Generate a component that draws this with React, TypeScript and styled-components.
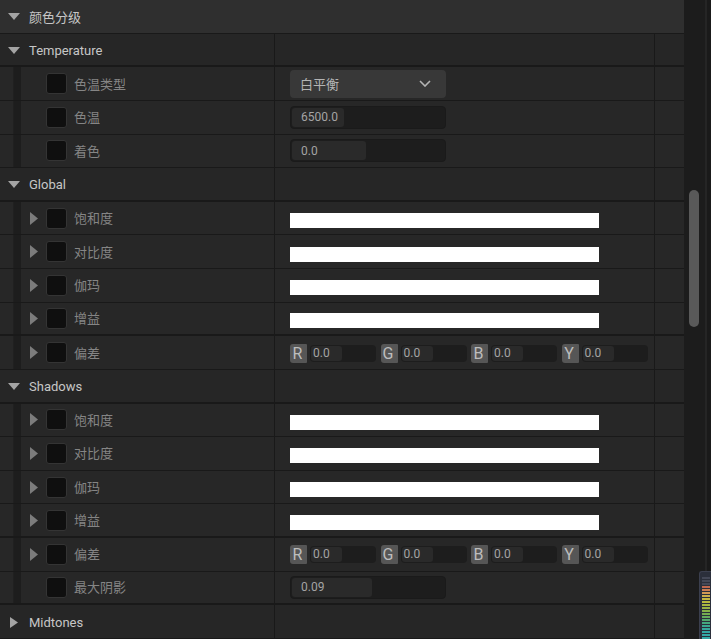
import React from 'react';
import styled, { createGlobalStyle } from 'styled-components';

const GlobalStyle = createGlobalStyle`
  html, body { margin: 0; padding: 0; background: #1a1a1a; }
  body { font-family: Roboto, "Noto Sans CJK SC", sans-serif; -webkit-font-smoothing: antialiased; }
  #root { width: 711px; height: 639px; }
`;

const ROW_H = '33.63px';
const LINE = '#191919';

const Screen = styled.div`
  position: relative;
  display: flex;
  width: 711px;
  height: 639px;
  overflow: hidden;
  background: #1a1a1a;
`;

const Panel = styled.div`
  width: 684px;
  display: flex;
  flex-direction: column;
  background: #262626;
`;

const CategoryRow = styled.div`
  box-sizing: border-box;
  height: ${ROW_H};
  flex: none;
  display: flex;
  align-items: center;
  gap: 9px;
  padding-left: 8px;
  background: #2f2f2f;
  border-bottom: 1px solid ${LINE};
  color: #c6c6c6;
  font-size: 13px;
`;

const Row = styled.div<{ $thick?: boolean; $item?: boolean }>`
  box-sizing: border-box;
  height: ${ROW_H};
  flex: none;
  display: flex;
  background: ${(p) => (p.$item ? '#272727' : '#262626')};
  border-bottom: ${(p) => (p.$thick ? 2 : 1)}px solid ${LINE};
`;

const NameCell = styled.div`
  width: 274px;
  flex: none;
  display: flex;
  align-items: center;
  border-right: 1px solid ${LINE};
`;

const ValueCell = styled.div`
  width: 380px;
  flex: none;
  display: flex;
  align-items: center;
  padding-left: 15px;
  box-sizing: border-box;
  border-right: 1px solid ${LINE};
`;

const ResetCell = styled.div`
  flex: 1;
`;

const GroupHead = styled.div<{ $open: boolean }>`
  display: flex;
  align-items: center;
  margin-top: 2px;
  padding-left: ${(p) => (p.$open ? 8 : 10)}px;
  gap: ${(p) => (p.$open ? 9 : 11)}px;
  color: #c6c6c6;
  font-size: 13px;
`;

const IndentStrip = styled.div`
  align-self: stretch;
  width: 8px;
  margin-left: 13px;
  background: #1d1d1d;
  border-left: 1px solid #202020;
  box-sizing: border-box;
`;

const ArrowSlot = styled.div`
  width: 16px;
  margin-left: 9px;
  display: flex;
  align-items: center;
`;

const Check = styled.div`
  width: 21px;
  height: 21px;
  box-sizing: border-box;
  border-radius: 3px;
  background: #0f0f0f;
  border: 1px solid #343434;
  flex: none;
`;

const Label = styled.span`
  margin-left: 7px;
  margin-top: -1px;
  color: #858585;
  font-size: 13px;
`;

const Dropdown = styled.div`
  width: 156px;
  height: 28px;
  box-sizing: border-box;
  border-radius: 4px;
  background: #383838;
  display: flex;
  align-items: center;
  justify-content: space-between;
  padding: 0 15px 0 10px;
  color: #b4b4b4;
  font-size: 13px;
`;

const NumberBox = styled.div`
  width: 156px;
  height: 23px;
  box-sizing: border-box;
  border-radius: 4px;
  background: #1d1d1d;
  border: 1px solid #1a1a1a;
  padding: 1px;
  display: flex;
`;

const Fill = styled.div`
  height: 100%;
  border-radius: 3px;
  background: #2a2a2a;
  display: flex;
  align-items: center;
  padding-left: 9px;
  box-sizing: border-box;
  color: #a4a4a4;
  font-size: 12px;
  white-space: nowrap;
`;

const WhiteBar = styled.div`
  width: 309px;
  height: 15px;
  margin-top: 5px;
  background: #ffffff;
`;

const Channels = styled.div`
  display: flex;
  gap: 4.5px;
  margin-top: 1px;
`;

const Channel = styled.div`
  display: flex;
  align-items: center;
`;

const ChannelTag = styled.div`
  width: 17px;
  height: 19px;
  border-radius: 3px 1px 1px 3px;
  background: #565656;
  color: #bdbdbd;
  font-size: 16px;
  line-height: 19px;
  text-align: center;
  text-indent: -2px;
`;

const ChannelField = styled.div`
  width: 66px;
  height: 17px;
  margin-left: 3px;
  box-sizing: border-box;
  border-radius: 4px;
  background: #1d1d1d;
  padding: 1px;
  display: flex;
`;

const ChannelFill = styled.div`
  width: 31px;
  height: 100%;
  border-radius: 3px;
  background: #2a2a2a;
  color: #a4a4a4;
  font-size: 12px;
  line-height: 15px;
  padding-left: 2px;
  box-sizing: border-box;
`;

const ScrollTrack = styled.div`
  width: 21px;
  background: #1c1c1c;
  display: flex;
  flex-direction: column;
  align-items: flex-start;
`;

const Thumb = styled.div`
  width: 10px;
  height: 137px;
  margin: 190px 0 0 5px;
  border-radius: 5px;
  background: #595959;
`;

const EdgeLine = styled.div`
  width: 2px;
  background: #252525;
`;

const Edge = styled.div`
  width: 4px;
  background: #1a1a1a;
`;

const Meter = styled.div`
  position: absolute;
  right: 0;
  bottom: 0;
  width: 12px;
  height: 68px;
  box-sizing: border-box;
  background: #2b2f3b;
  border: 1px solid #3b3f4e;
  border-right: none;
  border-bottom: none;
  border-radius: 3px 0 0 0;
  padding: 5px 0 0 2px;
  display: flex;
  flex-direction: column;
  gap: 1px;
`;

const MeterBar = styled.div<{ $c: string }>`
  width: 8px;
  height: 2px;
  background: ${(p) => p.$c};
`;

const DownTri = ({ c = '#a4a4a4' }: { c?: string }) => (
  <svg width="12" height="7" viewBox="0 0 12 7">
    <polygon points="0,0 12,0 6,7" fill={c} />
  </svg>
);

const RightTri = ({ w = 8, h = 11, c = '#a4a4a4' }: { w?: number; h?: number; c?: string }) => (
  <svg width={w} height={h} viewBox={`0 0 ${w} ${h}`}>
    <polygon points={`0,0 ${w},${h / 2} 0,${h}`} fill={c} />
  </svg>
);

const Chevron = () => (
  <svg width="12" height="7" viewBox="0 0 12 7">
    <polyline points="1,1 6,6 11,1" fill="none" stroke="#b4b4b4" strokeWidth="1.6" />
  </svg>
);

type Value =
  | { kind: 'dropdown'; text: string }
  | { kind: 'number'; text: string; fill: number }
  | { kind: 'bar' }
  | { kind: 'rgby' };

type RowData =
  | { type: 'group'; label: string; open: boolean; thick?: boolean }
  | { type: 'item'; label: string; arrow: boolean; value: Value; thick?: boolean };

const rows: RowData[] = [
  { type: 'group', label: 'Temperature', open: true, thick: true },
  { type: 'item', label: '色温类型', arrow: false, value: { kind: 'dropdown', text: '白平衡' } },
  { type: 'item', label: '色温', arrow: false, value: { kind: 'number', text: '6500.0', fill: 52 } },
  { type: 'item', label: '着色', arrow: false, value: { kind: 'number', text: '0.0', fill: 74 } },
  { type: 'group', label: 'Global', open: true, thick: true },
  { type: 'item', label: '饱和度', arrow: true, value: { kind: 'bar' } },
  { type: 'item', label: '对比度', arrow: true, value: { kind: 'bar' } },
  { type: 'item', label: '伽玛', arrow: true, value: { kind: 'bar' } },
  { type: 'item', label: '增益', arrow: true, value: { kind: 'bar' }, thick: true },
  { type: 'item', label: '偏差', arrow: true, value: { kind: 'rgby' } },
  { type: 'group', label: 'Shadows', open: true, thick: true },
  { type: 'item', label: '饱和度', arrow: true, value: { kind: 'bar' } },
  { type: 'item', label: '对比度', arrow: true, value: { kind: 'bar' } },
  { type: 'item', label: '伽玛', arrow: true, value: { kind: 'bar' } },
  { type: 'item', label: '增益', arrow: true, value: { kind: 'bar' }, thick: true },
  { type: 'item', label: '偏差', arrow: true, value: { kind: 'rgby' } },
  { type: 'item', label: '最大阴影', arrow: false, value: { kind: 'number', text: '0.09', fill: 80 }, thick: true },
  { type: 'group', label: 'Midtones', open: false },
];

const meterColors = [
  '#444857', '#444857', '#444857', '#c0684f', '#c97d52', '#d09a55', '#c9ae4a', '#c4b840',
  '#b8bb3e', '#a8b840', '#98b444', '#86b048', '#74ac50', '#64aa5c', '#52a86c', '#44a87e',
  '#3aa890', '#36a89c', '#34a8a4', '#34a8a8', '#34a8a8',
];

function renderValue(v: Value) {
  switch (v.kind) {
    case 'dropdown':
      return (
        <Dropdown>
          <span>{v.text}</span>
          <Chevron />
        </Dropdown>
      );
    case 'number':
      return (
        <NumberBox>
          <Fill style={{ width: v.fill }}>{v.text}</Fill>
        </NumberBox>
      );
    case 'bar':
      return <WhiteBar />;
    case 'rgby':
      return (
        <Channels>
          {['R', 'G', 'B', 'Y'].map((ch) => (
            <Channel key={ch}>
              <ChannelTag>{ch}</ChannelTag>
              <ChannelField>
                <ChannelFill>0.0</ChannelFill>
              </ChannelField>
            </Channel>
          ))}
        </Channels>
      );
  }
}

export default function App() {
  return (
    <>
      <GlobalStyle />
      <Screen>
        <Panel>
          <CategoryRow>
            <DownTri />
            <span>颜色分级</span>
          </CategoryRow>
          {rows.map((r, i) =>
            r.type === 'group' ? (
              <Row key={i} $thick={r.thick}>
                <NameCell>
                  <GroupHead $open={r.open}>
                    {r.open ? <DownTri /> : <RightTri />}
                    <span>{r.label}</span>
                  </GroupHead>
                </NameCell>
                <ValueCell />
                <ResetCell />
              </Row>
            ) : (
              <Row key={i} $item $thick={r.thick}>
                <NameCell>
                  <IndentStrip />
                  <ArrowSlot>{r.arrow && <RightTri w={8} h={13} c="#7c7c7c" />}</ArrowSlot>
                  <Check />
                  <Label>{r.label}</Label>
                </NameCell>
                <ValueCell>{renderValue(r.value)}</ValueCell>
                <ResetCell />
              </Row>
            )
          )}
        </Panel>
        <ScrollTrack>
          <Thumb />
        </ScrollTrack>
        <EdgeLine />
        <Edge />
        <Meter>
          {meterColors.map((c, i) => (
            <MeterBar key={i} $c={c} />
          ))}
        </Meter>
      </Screen>
    </>
  );
}
